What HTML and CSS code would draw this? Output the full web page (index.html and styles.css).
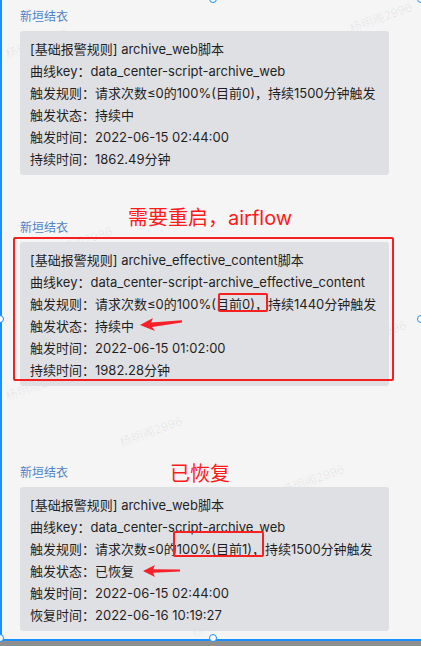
FILE: index.html
```html
<!DOCTYPE html>
<html lang="zh-CN">
<head>
<meta charset="utf-8">
<title>报警消息</title>
<link rel="stylesheet" href="styles.css">
</head>
<body>
<div class="frame">
  <div class="watermarks">
    <span class="wm wm-1">杨明阁2996</span>
    <span class="wm wm-2">杨明阁2996</span>
    <span class="wm wm-3">杨明阁2996</span>
    <span class="wm wm-4">杨明阁2996</span>
    <span class="wm wm-5">杨明阁2996</span>
    <span class="wm wm-6">杨明阁2996</span>
    <span class="wm wm-7">杨明阁2996</span>
    <span class="wm wm-8">杨明阁2996</span>
  </div>

  <section class="msg msg-1">
    <div class="sender">新垣结衣</div>
    <div class="card">
      <p>[基础报警规则] archive_web脚本</p>
      <p>曲线key：data_center-script-archive_web</p>
      <p>触发规则：请求次数≤0的100%(目前0)，持续1500分钟触发</p>
      <p>触发状态：持续中</p>
      <p>触发时间：2022-06-15 02:44:00</p>
      <p>持续时间：1862.49分钟</p>
    </div>
  </section>

  <section class="msg msg-2">
    <div class="sender">新垣结衣</div>
    <div class="card">
      <p>[基础报警规则] archive_effective_content脚本</p>
      <p>曲线key：data_center-script-archive_effective_content</p>
      <p>触发规则：请求次数≤0的100%(目前0)，持续1440分钟触发</p>
      <p>触发状态：持续中</p>
      <p>触发时间：2022-06-15 01:02:00</p>
      <p>持续时间：1982.28分钟</p>
    </div>
    <div class="note note-restart">需要重启，airflow</div>
    <div class="mark mark-card"></div>
    <div class="mark mark-rule-2"></div>
    <svg class="arrow arrow-2" viewBox="0 0 42 14" aria-hidden="true"><path d="M0 8 L13 1 L11 5.5 L42 3.2 L42 5.6 L12 10 L15 14 Z" fill="#f5202a"/></svg>
  </section>

  <section class="msg msg-3">
    <div class="sender">新垣结衣</div>
    <div class="card">
      <p>[基础报警规则] archive_web脚本</p>
      <p>曲线key：data_center-script-archive_web</p>
      <p>触发规则：请求次数≤0的100%(目前1)，持续1500分钟触发</p>
      <p>触发状态：已恢复</p>
      <p>触发时间：2022-06-15 02:44:00</p>
      <p>恢复时间：2022-06-16 10:19:27</p>
    </div>
    <div class="note note-recovered">已恢复</div>
    <div class="mark mark-rule-3"></div>
    <svg class="arrow arrow-3" viewBox="0 0 37 12" aria-hidden="true"><path d="M0 6 L12 0 L10 4.3 L37 4.6 L37 6.6 L10 7.8 L12 12 Z" fill="#f5202a"/></svg>
  </section>

  <span class="handle handle-top"></span>
  <span class="handle handle-topright"></span>
  <span class="handle handle-left"></span>
  <span class="handle handle-right"></span>
  <span class="handle handle-bottomleft"></span>
  <span class="handle handle-bottom"></span>
</div>
</body>
</html>
```

FILE: styles.css
```css
* { box-sizing: border-box; }

html, body {
  margin: 0;
  padding: 0;
}

body {
  width: 421px;
  height: 646px;
  overflow: hidden;
  background: #8f8f8f;
  font-family: Inter, "Noto Sans CJK SC", sans-serif;
}

.frame {
  position: relative;
  height: 641px;
  background: #f5f5f5;
  border-left: 2px solid #1890ff;
  border-bottom: 2px solid #1890ff;
  display: flex;
  flex-direction: column;
}

.msg {
  position: relative;
  padding-left: 18px;
}

.msg-1 { margin-top: 7px; }
.msg-2 { margin-top: 43px; }
.msg-3 { margin-top: 77px; }

.sender {
  font-size: 12px;
  line-height: 20px;
  height: 20px;
  color: #4f82c6;
  margin-bottom: 4px;
}

.card {
  width: 369px;
  background: #dfe0e4;
  border-radius: 3px;
  padding: 7px 10px 5px;
  color: #1f1f1f;
  font-size: 13px;
  line-height: 22px;
}

.card p {
  margin: 0;
  white-space: nowrap;
}

.note {
  position: absolute;
  color: #ff1a1a;
  font-size: 20px;
  line-height: 24px;
  white-space: nowrap;
}

.note-restart { left: 126px; top: -12px; }
.note-recovered { left: 168px; top: -1px; }

.mark {
  position: absolute;
  border: 2px solid #f62020;
  border-radius: 2px;
}

.mark-card { left: 11px; top: 19px; width: 381px; height: 144px; border-width: 2.5px; }
.mark-rule-2 { left: 216px; top: 75px; width: 50px; height: 19px; }
.mark-rule-3 { left: 171px; top: 68px; width: 91px; height: 26px; }

.arrow { position: absolute; }
.arrow-2 { left: 138px; top: 99px; width: 42px; height: 14px; }
.arrow-3 { left: 141px; top: 102px; width: 37px; height: 12px; }

.watermarks {
  position: absolute;
  inset: 0;
  overflow: hidden;
  pointer-events: none;
}

.wm {
  position: absolute;
  font-size: 12px;
  color: rgba(0, 0, 0, 0.07);
  transform: rotate(-20deg);
  white-space: nowrap;
}

.wm-1 { left: 346px; top: 8px; }
.wm-2 { left: 2px; top: 34px; }
.wm-3 { left: 46px; top: 232px; }
.wm-4 { left: 340px; top: 326px; }
.wm-5 { left: 2px; top: 376px; }
.wm-6 { left: 116px; top: 422px; }
.wm-7 { left: 278px; top: 470px; }
.wm-8 { left: 188px; top: 612px; }

.handle {
  position: absolute;
  width: 8px;
  height: 8px;
  border-radius: 50%;
  background: #fff;
  border: 1.5px solid #1890ff;
}

.handle-top { left: 207px; top: -5px; }
.handle-topright { left: 415px; top: -5px; }
.handle-left { left: -6px; top: 315px; }
.handle-right { left: 415px; top: 315px; }
.handle-bottomleft { left: -6px; top: 634px; }
.handle-bottom { left: 207px; top: 634px; }
```
